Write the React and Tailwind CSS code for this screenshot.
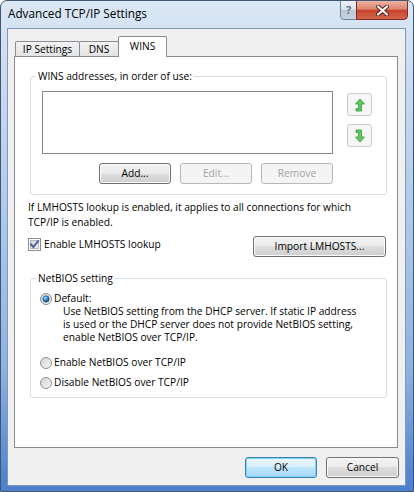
import React from "react";

const btnNormal =
  "border-[#707070] bg-[linear-gradient(to_bottom,#f2f2f2_0%,#ebebeb_50%,#dddddd_50%,#cfcfcf_100%)] shadow-[inset_0_0_0_1px_#fbfbfb] text-black";
const btnDisabled = "border-[#b5b9bc] bg-[#f4f4f4] text-[#a3a3a3]";
const btnDefault =
  "border-[#3c7fb1] bg-[linear-gradient(to_bottom,#eaf6fd_0%,#d9f0fc_50%,#bee6fd_50%,#a7d9f5_100%)] shadow-[inset_0_0_0_1px_#7ed6f7] text-black";

function Button({ children, kind = "normal", className = "" }) {
  const look = kind === "disabled" ? btnDisabled : kind === "default" ? btnDefault : btnNormal;
  return (
    <div
      className={`h-[21px] rounded-[3px] border flex items-center justify-center text-[10.2px] leading-[13px] ${look} ${className}`}
    >
      {children}
    </div>
  );
}

function Tab({ children, selected, className = "" }) {
  if (selected) {
    return (
      <div
        className={`h-[21px] -mb-px flex justify-center pt-[3px] text-[10.2px] leading-[13px] bg-white border-t border-l border-r border-[#898c95] rounded-t-[2px] ${className}`}
      >
        {children}
      </div>
    );
  }
  return (
    <div
      className={`h-[15px] flex justify-center pt-[1px] text-[10.2px] leading-[13px] bg-[linear-gradient(to_bottom,#f3f3f3,#e3e3e3)] border-t border-l border-r border-[#898c95] rounded-t-[2px] ${className}`}
    >
      {children}
    </div>
  );
}

function Checkbox() {
  return (
    <svg width="13" height="13" viewBox="0 0 13 13" className="shrink-0">
      <defs>
        <linearGradient id="cbFill" x1="0" y1="0" x2="1" y2="1">
          <stop offset="0" stopColor="#cdd1d6" />
          <stop offset="1" stopColor="#f7f7f7" />
        </linearGradient>
      </defs>
      <rect x="0.5" y="0.5" width="12" height="12" fill="#fff" stroke="#8e8f8f" />
      <rect x="2.5" y="2.5" width="8" height="8" fill="url(#cbFill)" stroke="#b4b8bd" />
      <path d="M3 6.3 L5.4 9 L10.2 3" fill="none" stroke="#4a5c9a" strokeWidth="1.9" strokeLinecap="square" />
    </svg>
  );
}

function Radio({ checked, id }) {
  return (
    <svg width="12" height="12" viewBox="0 0 12 12" className="shrink-0">
      <defs>
        <linearGradient id={`rb-${id}`} x1="0" y1="0" x2="1" y2="1">
          <stop offset="0" stopColor="#d2d2d2" />
          <stop offset="1" stopColor="#f8f8f8" />
        </linearGradient>
        <radialGradient id={`rd-${id}`} cx="0.35" cy="0.3" r="0.75">
          <stop offset="0" stopColor="#a8def9" />
          <stop offset="0.5" stopColor="#3a86c8" />
          <stop offset="1" stopColor="#124a86" />
        </radialGradient>
      </defs>
      <circle cx="6" cy="6" r="5.5" fill={`url(#rb-${id})`} stroke="#8e8f8f" strokeWidth="1" />
      {checked && <circle cx="6" cy="6" r="3.2" fill={`url(#rd-${id})`} stroke="#1b4f86" strokeWidth="0.6" />}
    </svg>
  );
}

function MoveUpIcon() {
  return (
    <svg width="11" height="14" viewBox="0 0 11 14">
      <polygon
        points="6,1 10.5,6 7.5,6 7.5,13 2,13 2,10.5 4.5,10.5 4.5,6 1.5,6"
        fill="#62c85f"
        stroke="#2f9a3c"
        strokeWidth="0.8"
        strokeLinejoin="round"
      />
    </svg>
  );
}

function MoveDownIcon() {
  return (
    <svg width="11" height="14" viewBox="0 0 11 14">
      <polygon
        points="2,1 7.5,1 7.5,8 10.5,8 6,13 1.5,8 4.5,8 4.5,3.5 2,3.5"
        fill="#62c85f"
        stroke="#2f9a3c"
        strokeWidth="0.8"
        strokeLinejoin="round"
      />
    </svg>
  );
}

function ArrowButton({ children, className = "" }) {
  return (
    <div
      className={`w-[25px] h-[23px] rounded-[3px] border border-[#c9cccf] bg-[#f6f6f6] flex items-center justify-center ${className}`}
    >
      {children}
    </div>
  );
}

function GroupBox({ label, children, className = "" }) {
  return (
    <fieldset className={`ml-[2px] w-[357px] rounded-[3px] border border-[#d5dfe5] p-0 ${className}`}>
      <legend className="ml-[5px] px-[2px] text-[10.2px] leading-[13px]">{label}</legend>
      {children}
    </fieldset>
  );
}

export default function App() {
  return (
    <div className="w-[414px] h-[492px] flex flex-col rounded-t-[7px] border border-[#3f5573] bg-[linear-gradient(to_bottom,#dbe7f4_0%,#c6d8ee_20%,#a9c5e8_50%,#8fb2e0_75%,#4a7fcc_100%)] pl-[6px] pr-[7px] pb-[5px] font-['Open_Sans',sans-serif] text-black overflow-hidden">
      {/* caption */}
      <div className="h-[27px] flex justify-between shrink-0">
        <div className="pl-[1px] pt-[5px] text-[11.75px] leading-[14px]">Advanced TCP/IP Settings</div>
        <div className="flex -mt-px mr-[-2px] h-[20px]">
          <div className="w-[17px] h-[20px] rounded-bl-[4px] border border-[#6f819b] bg-[linear-gradient(to_bottom,#eef2f7_0%,#d7dfe9_50%,#bcc8d6_51%,#c9d4e1_100%)] flex items-center justify-center text-[11px] leading-[12px] font-bold text-[#5d6f8c]">
            ?
          </div>
          <div className="w-[52px] h-[20px] -ml-px rounded-br-[4px] border border-[#7a2c22] bg-[linear-gradient(to_bottom,#ecb2a2_0%,#dc8470_45%,#c7432d_52%,#d4654a_100%)] flex items-center justify-center">
            <svg width="13" height="11" viewBox="0 0 13 11">
              <path d="M2 1.5 L11 9.5 M11 1.5 L2 9.5" stroke="#5a1c14" strokeWidth="4" strokeLinecap="round" />
              <path d="M2 1.5 L11 9.5 M11 1.5 L2 9.5" stroke="#ffffff" strokeWidth="2.2" strokeLinecap="round" />
            </svg>
          </div>
        </div>
      </div>

      {/* client area */}
      <div className="flex-1 flex flex-col border border-[#7f99bb] bg-[#f0f0f0] pl-[6px] pr-[7px] pt-[7px]">
        {/* tab strip */}
        <div className="h-[20px] flex items-end pl-[1px] relative z-10 shrink-0">
          <Tab className="w-[65px]">IP Settings</Tab>
          <Tab className="w-[40px] -ml-px">DNS</Tab>
          <Tab selected className="w-[49px] -ml-px">WINS</Tab>
        </div>

        {/* tab page */}
        <div className="h-[392px] w-[384px] border border-[#898c95] bg-white pl-[13px] shrink-0 flex flex-col">
          <GroupBox label="WINS addresses, in order of use:" className="mt-[13px]">
            <div className="flex pl-[11px] pt-[8px] pb-[10px]">
              <div className="flex flex-col w-[291px]">
                <div className="h-[63px] border border-[#828790] bg-white" />
                <div className="flex justify-end gap-[9px] mt-[9px]">
                  <Button className="w-[72px]">Add...</Button>
                  <Button kind="disabled" className="w-[72px]">Edit...</Button>
                  <Button kind="disabled" className="w-[72px]">Remove</Button>
                </div>
              </div>
              <div className="flex flex-col ml-[14px] mt-[2px]">
                <ArrowButton>
                  <MoveUpIcon />
                </ArrowButton>
                <ArrowButton className="mt-[8px]">
                  <MoveDownIcon />
                </ArrowButton>
              </div>
            </div>
          </GroupBox>

          <p className="mt-[5px] text-[10.2px] leading-[15px]">
            If LMHOSTS lookup is enabled, it applies to all connections for which
            <br />
            TCP/IP is enabled.
          </p>

          <div className="mt-[6px] w-[358px] flex justify-between items-start">
            <div className="flex items-center gap-[3px] mt-[2px]">
              <Checkbox />
              <span className="text-[10.2px] leading-[13px]">Enable LMHOSTS lookup</span>
            </div>
            <Button className="w-[133px]">Import LMHOSTS...</Button>
          </div>

          <GroupBox label="NetBIOS setting" className="mt-[15px]">
            <div className="flex flex-col pl-[9px] pt-[7px] pb-[8px] text-[10.2px] leading-[13px]">
              <div className="flex items-center gap-[2px]">
                <Radio checked id="def" />
                <span>Default:</span>
              </div>
              <div className="pl-[23px]">
                Use NetBIOS setting from the DHCP server. If static IP address
                <br />
                is used or the DHCP server does not provide NetBIOS setting,
                <br />
                enable NetBIOS over TCP/IP.
              </div>
              <div className="flex items-center gap-[2px] mt-[12px]">
                <Radio id="on" />
                <span>Enable NetBIOS over TCP/IP</span>
              </div>
              <div className="flex items-center gap-[2px] mt-[7px]">
                <Radio id="off" />
                <span>Disable NetBIOS over TCP/IP</span>
              </div>
            </div>
          </GroupBox>
        </div>

        {/* dialog buttons */}
        <div className="mt-[9px] flex justify-end gap-[9px] mr-[-1px] shrink-0">
          <Button kind="default" className="w-[72px]">OK</Button>
          <Button className="w-[73px]">Cancel</Button>
        </div>
      </div>
    </div>
  );
}
